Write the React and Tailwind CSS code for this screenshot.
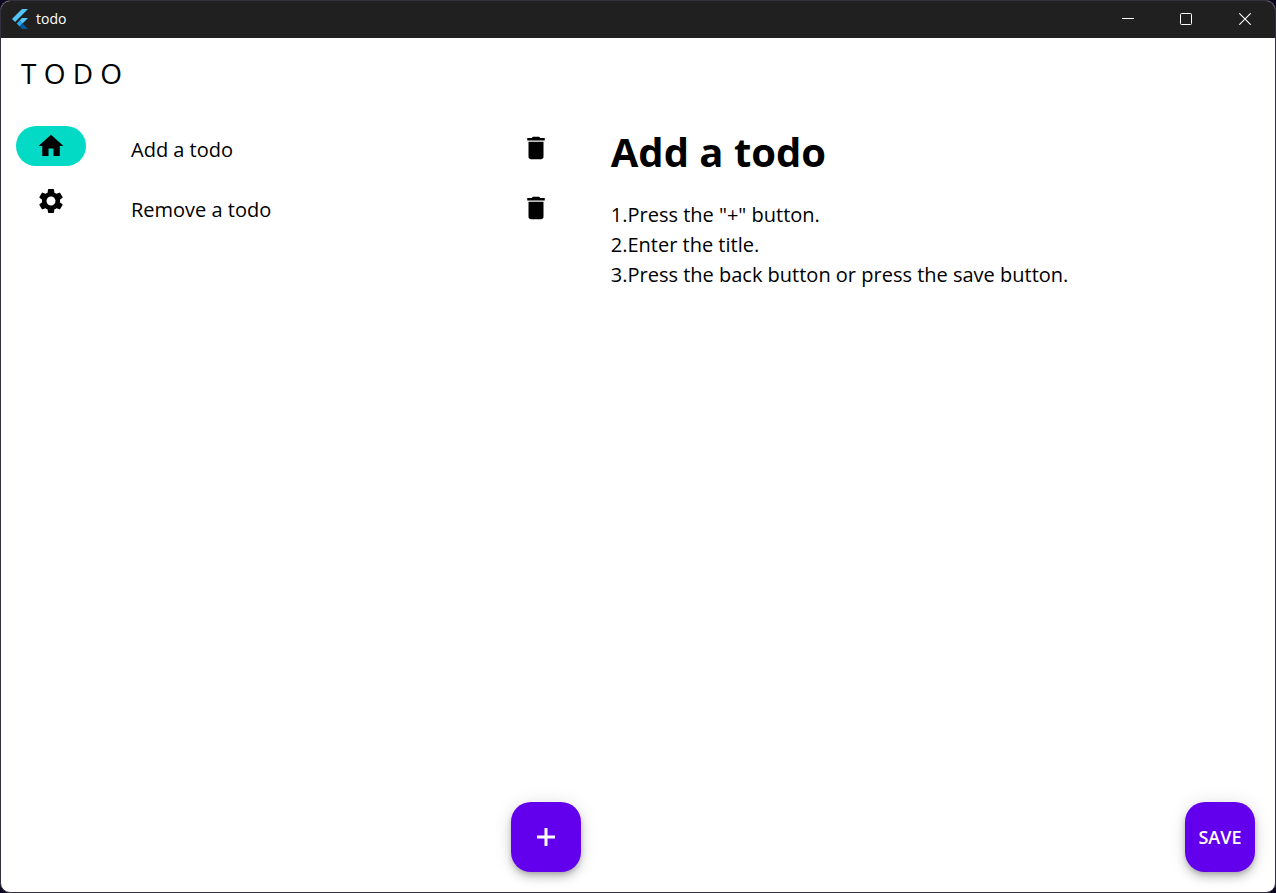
import { useState } from "react";
import { MdDelete, MdHome, MdSettings } from "react-icons/md";

const initialTodos = [
  {
    id: 1,
    title: "Add a todo",
    steps: [
      '1.Press the "+" button.',
      "2.Enter the title.",
      "3.Press the back button or press the save button.",
    ],
  },
  { id: 2, title: "Remove a todo", steps: ["1.Press the trash button."] },
];

function FlutterLogo() {
  return (
    <svg viewBox="0 0 16 20" className="h-5 w-4" aria-hidden="true">
      <path d="M10 0h6L3.1 12.9 0 9.9z" fill="#54c5f8" />
      <path d="M10 9.1h6L10.6 14.5 7.6 11.5z" fill="#54c5f8" />
      <path d="M7.6 11.5 10.6 14.5 7.6 17.5 4.6 14.5z" fill="#29a9ee" />
      <path d="M7.6 17.5 10.6 14.5 16 20h-6z" fill="#01579b" />
    </svg>
  );
}

function TitleBar() {
  return (
    <header className="flex h-[37px] shrink-0 items-center bg-[#202020] pb-px pl-[11px] text-white">
      <FlutterLogo />
      <span className="ml-2 flex-1 text-sm">todo</span>
      <button type="button" aria-label="Minimize" className="flex h-full w-[58px] items-center justify-center">
        <svg viewBox="0 0 12 12" className="size-3" aria-hidden="true">
          <path d="M0 5.5h12" stroke="currentColor" />
        </svg>
      </button>
      <button type="button" aria-label="Maximize" className="flex h-full w-[58px] items-center justify-center">
        <svg viewBox="0 0 12 12" className="size-3" fill="none" aria-hidden="true">
          <rect x="0.5" y="0.5" width="11" height="11" rx="1" stroke="currentColor" />
        </svg>
      </button>
      <button type="button" aria-label="Close" className="flex h-full w-[60px] items-center justify-center">
        <svg viewBox="0 0 12 12" className="size-3" aria-hidden="true">
          <path d="M0.3 0.3l11.4 11.4M11.7 0.3L0.3 11.7" stroke="currentColor" strokeWidth="1.1" />
        </svg>
      </button>
    </header>
  );
}

function FloatingButton({ children, ...rest }) {
  return (
    <button
      type="button"
      className="flex size-[70px] items-center justify-center rounded-[20px] bg-[#6200ee] text-lg font-semibold text-white shadow-[0_3px_5px_-1px_rgba(0,0,0,0.2),0_6px_10px_rgba(0,0,0,0.14),0_1px_18px_rgba(0,0,0,0.12)]"
      {...rest}
    >
      {children}
    </button>
  );
}

export default function App() {
  const [todos, setTodos] = useState(initialTodos);
  const [selectedId, setSelectedId] = useState(1);
  const selected = todos.find((todo) => todo.id === selectedId);

  const addTodo = () => {
    const id = Date.now();
    setTodos([...todos, { id, title: "New todo", steps: [] }]);
    setSelectedId(id);
  };

  return (
    <div className="min-h-screen bg-[#0c0620] font-['Open_Sans','Noto_Sans',sans-serif] text-black">
      <div className="flex min-h-screen flex-col overflow-hidden rounded-[10px] border border-[#35303f] bg-white">
        <TitleBar />
        <h1 className="px-5 pt-[15px] text-[28px] leading-10 font-normal whitespace-pre">T O D O</h1>
        <div className="grid flex-1 grid-cols-[101px_5fr_7fr] pt-[27px]">
          <nav className="flex flex-col items-start gap-[15px] pt-[6px] pl-[15px]">
            <button
              type="button"
              aria-label="Home"
              className="flex h-10 w-[70px] items-center justify-center rounded-full bg-[#03dac5]"
            >
              <MdHome className="size-[30px]" />
            </button>
            <button type="button" aria-label="Settings" className="flex h-10 w-[70px] items-center justify-center">
              <MdSettings className="size-[30px]" />
            </button>
          </nav>

          <section aria-label="Todos" className="flex flex-col">
            <ul>
              {todos.map((todo) => (
                <li key={todo.id} className="flex h-[60px] items-center pr-10 pl-[29px]">
                  <button
                    type="button"
                    className="flex-1 text-left text-xl"
                    onClick={() => setSelectedId(todo.id)}
                  >
                    {todo.title}
                  </button>
                  <button
                    type="button"
                    aria-label={`Delete ${todo.title}`}
                    className="pb-1"
                    onClick={() => setTodos(todos.filter((item) => item.id !== todo.id))}
                  >
                    <MdDelete className="size-[30px]" />
                  </button>
                </li>
              ))}
            </ul>
            <div className="mt-auto flex justify-end pr-[10px] pb-5">
              <FloatingButton aria-label="Add todo" onClick={addTodo}>
                <svg viewBox="0 0 18 18" className="size-[18px]" aria-hidden="true">
                  <path d="M9 0v18M0 9h18" stroke="currentColor" strokeWidth="3" />
                </svg>
              </FloatingButton>
            </div>
          </section>

          <article className="flex flex-col pr-5 pl-5">
            <h2 className="pt-[7px] text-[40px] leading-[50px] font-bold">{selected?.title}</h2>
            <div className="pt-[23px] text-xl leading-[30px]">
              {selected?.steps.map((step) => (
                <p key={step}>{step}</p>
              ))}
            </div>
            <div className="mt-auto flex justify-end pb-5">
              <FloatingButton>SAVE</FloatingButton>
            </div>
          </article>
        </div>
      </div>
    </div>
  );
}
